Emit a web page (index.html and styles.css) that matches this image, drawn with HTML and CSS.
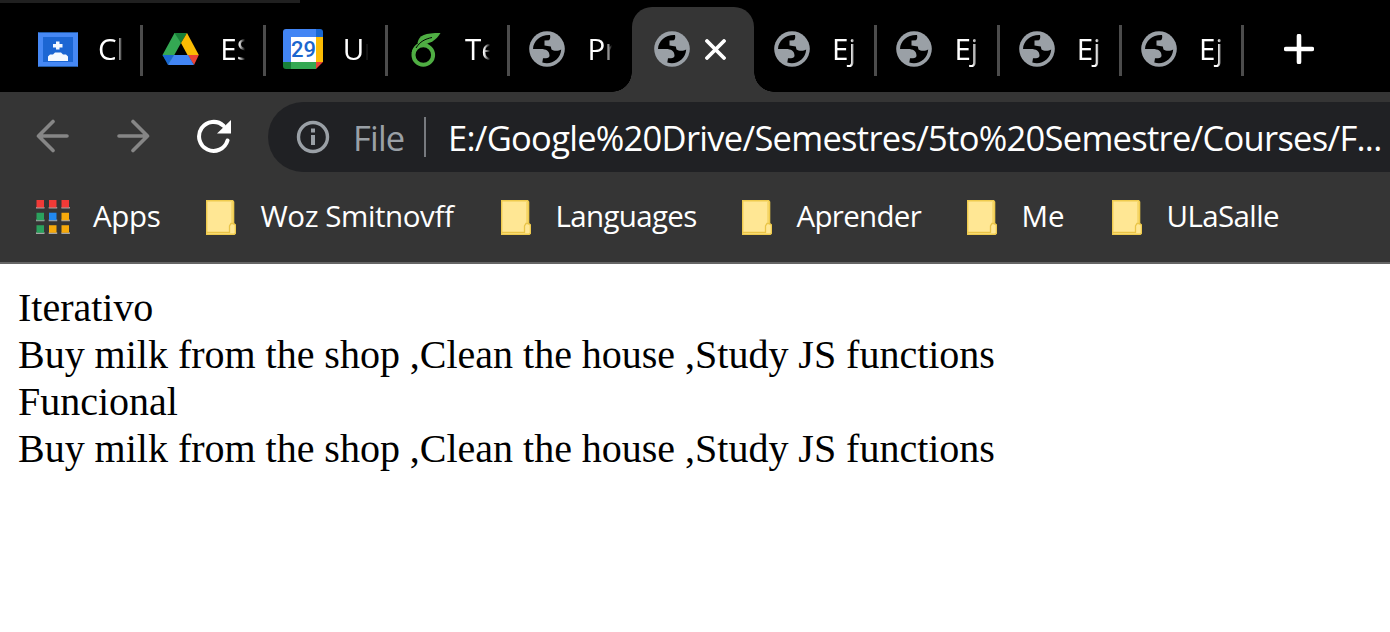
FILE: index.html
```html
<!DOCTYPE html>
<html lang="es">
<head>
<meta charset="utf-8">
<title>Ejercicio</title>
<link rel="stylesheet" href="styles.css">
</head>
<body>
<svg class="defs" width="0" height="0">
  <symbol id="globe" viewBox="0 0 36 36">
    <circle cx="18" cy="18" r="17.8" fill="#9aa0a6"/>
    <path class="sea" d="M21 4C12 3.500 4.300 9.500 4 18H12C17 18 20.500 20 20.500 24.500C20.500 26.500 19 27.300 14 27.300L13.300 31.500C22 34.500 31.500 28.500 32.200 18.500C30 20 25 20.500 22.500 18.500L21.800 15.500L15.500 14.500V9.500L20 9.300C21.300 8 21.500 6 21 4Z"/>
  </symbol>
  <symbol id="folder" viewBox="0 0 30 35">
    <path d="M.6.6H26.500L27.500 2V23.500L29.500 25V33L28 34.400H.6Z" fill="#ffe794" stroke="#efcb4e" stroke-width="1.600"/>
    <path d="M1 32.300H23.500V26L25 23.500H28" fill="none" stroke="#e9c448" stroke-width="1.300"/>
    <path d="M26 2V23.500" stroke="#efcb4e"/>
  </symbol>
</svg>

<header class="tabstrip">
  <div class="tab">
    <svg class="icon" viewBox="0 0 40 40"><rect y="3" width="40" height="35" rx="1" fill="#4688f4"/><path d="M1 3.500H39M1 37.500H39" stroke="#205aa7" stroke-width="1.200"/><rect x="5" y="8" width="30" height="25" fill="#1c66d3"/><path d="M18 12.500H21.500V15H24.500V18.500H21.500V20.500H18V18.500H15V15H18ZM10 32V27.500L12 25.500H15L17 23.500H23L25 25.500H28L30 27.500V32Z" fill="#f5f9ff"/></svg>
    <span class="name">Cl</span>
  </div>
  <div class="tab">
    <svg class="icon" viewBox="0 0 40 40"><path d="M14.500 4H18L21 14L14.300 26L9 36L2.500 26Z" fill="#34a853"/><path d="M14.500 4H27L21 14Z" fill="#188038"/><path d="M27 4L38.800 26H27.500L21 14Z" fill="#fbbc04"/><path d="M27.500 26H38.800L34 36Z" fill="#ea4335"/><path d="M14 26L8 36L2.500 26Z" fill="#1967d2"/><path d="M14 26H28L34 36H8Z" fill="#4285f4"/></svg>
    <span class="name">ES</span>
  </div>
  <div class="tab">
    <svg class="icon calendar" viewBox="0 0 40 40"><path d="M0 3Q0 0 3 0H33V33H0Z" fill="#4285f4"/><path d="M33 0H37Q40 0 40 3V8H33Z" fill="#1967d2"/><path d="M33 8H40V33H33Z" fill="#fbbc04"/><path d="M0 33H8V40H3Q0 40 0 37Z" fill="#188038"/><path d="M8 33H33V40H8Z" fill="#34a853"/><path d="M33 33H40L33 40Z" fill="#ea4335"/><rect x="8" y="8" width="25" height="25" fill="#fff"/><text class="date" x="20.500" y="28" text-anchor="middle">29</text></svg>
    <span class="name">Un</span>
  </div>
  <div class="tab">
    <svg class="icon" viewBox="0 0 40 40" fill="none"><circle cx="18.300" cy="26" r="9.800" stroke="#4fae43" stroke-width="4"/><path d="M8.300 24C9 19 14 14.500 23 12.500" stroke="#4fae43" stroke-width="3.400"/><path d="M12.500 14C14 6 20 4 35.500 4C31 11.500 25 15.500 14 15Z" fill="#4fae43"/><path d="M11 19C15 12.500 20 10 27 8.500" stroke="#000" stroke-width="1"/></svg>
    <span class="name">Te</span>
  </div>
  <div class="tab plain"><svg class="icon globe"><use href="#globe"/></svg><span class="name">Pr</span></div>
  <div class="tab active">
    <svg class="icon globe"><use href="#globe"/></svg>
    <svg class="close" viewBox="0 0 21 21"><path d="M2 2L19 19M19 2L2 19" stroke="#fff" stroke-width="3.800" stroke-linecap="round"/></svg>
  </div>
  <div class="tab"><svg class="icon globe"><use href="#globe"/></svg><span class="name">Ej</span></div>
  <div class="tab"><svg class="icon globe"><use href="#globe"/></svg><span class="name">Ej</span></div>
  <div class="tab"><svg class="icon globe"><use href="#globe"/></svg><span class="name">Ej</span></div>
  <div class="tab"><svg class="icon globe"><use href="#globe"/></svg><span class="name">Ej</span></div>
  <svg class="plus" viewBox="0 0 30 30"><path d="M15 2V28M2 15H28" stroke="#fff" stroke-width="4.600" stroke-linecap="round"/></svg>
</header>

<nav class="toolbar">
  <svg class="nav-icon" viewBox="0 0 34 34"><path d="M31 17H3M17 2.500L2.500 17L17 31.500" /></svg>
  <svg class="nav-icon forward" viewBox="0 0 34 34"><path d="M3 17H31M17 2.500L31.500 17L17 31.500" /></svg>
  <svg class="reload" viewBox="0 0 36 34"><path d="M31.500 21.500A14.500 14.500 0 1 1 27.500 6.800" fill="none" stroke="#fff" stroke-width="4" stroke-linecap="round"/><path d="M35 1V14.500H21Z" fill="#fff"/></svg>
  <div class="omnibox">
    <svg class="info" viewBox="0 0 34 34"><circle cx="17" cy="17" r="14.500" fill="none" stroke="#9aa0a6" stroke-width="3.400"/><path d="M15 8.500H19V12.500H15ZM15 15H19V25H15Z" fill="#9aa0a6"/></svg>
    <span class="scheme">File</span>
    <span class="rule"></span>
    <span class="url">E:/Google%20Drive/Semestres/5to%20Semestre/Courses/F...</span>
  </div>
</nav>

<nav class="bookmarks">
  <div class="mark apps">
    <svg class="grid" viewBox="0 0 34 34"><path d="M0 7.700H8.500M12.700 7.700H21.200M25.400 7.700H33.900M0 20.400H8.500M12.700 20.400H21.200M25.400 20.400H33.900M0 33.100H8.500M12.700 33.100H21.200M25.400 33.100H33.900" stroke="#a5a5a5" stroke-width="1.600"/><path d="M.5 0H8V7.500H.5ZM13 0H20.500V7.500H13ZM25.500 0H33V7.500H25.500Z" fill="#f13a37"/><path d="M.5 12.700H8V20.200H.5ZM.5 25.300H8V32.800H.5Z" fill="#2ba15d"/><path d="M13 12.700H20.500V20.200H13Z" fill="#2188ef"/><path d="M25.500 12.700H33V20.200H25.500ZM13 25.300H20.500V32.800H13ZM25.500 25.300H33V32.800H25.500Z" fill="#f6a90b"/></svg>
    <span class="label l-apps">Apps</span>
  </div>
  <div class="mark woz"><svg class="folder"><use href="#folder"/></svg><span class="label l-woz">Woz Smitnovff</span></div>
  <div class="mark lang"><svg class="folder"><use href="#folder"/></svg><span class="label l-lang">Languages</span></div>
  <div class="mark apr"><svg class="folder"><use href="#folder"/></svg><span class="label l-apr">Aprender</span></div>
  <div class="mark me"><svg class="folder"><use href="#folder"/></svg><span class="label">Me</span></div>
  <div class="mark"><svg class="folder"><use href="#folder"/></svg><span class="label l-ula">ULaSalle</span></div>
</nav>

<main class="page">
  <div>Iterativo</div>
  <div>Buy milk from the shop ,Clean the house ,Study JS functions</div>
  <div>Funcional</div>
  <div>Buy milk from the shop ,Clean the house ,Study JS functions</div>
</main>
</body>
</html>
```
FILE: styles.css
```css
* { box-sizing: border-box; }
body { margin: 0; width: 1390px; height: 632px; overflow: hidden; background: #fff; font-family: "Open Sans", "Noto Sans", sans-serif; }
.defs { position: absolute; }
svg { display: block; flex: none; }

.tabstrip { display: flex; height: 92px; padding: 7px 0 0 20px; background: linear-gradient(#202020, #202020) 0 0 / 300px 3px no-repeat #000; }
.tab { position: relative; flex: none; display: flex; align-items: center; width: 122.35px; height: 85px; padding: 0 0 1px 18px; --sea: #000; }
.tab::after { content: ""; position: absolute; right: -1px; top: 18px; width: 3px; height: 51px; background: #4c4c4c; }
.tab.plain::after { display: none; }
.icon { width: 40px; height: 40px; }
.icon.globe { width: 36px; height: 36px; margin: 0 2px; }
.date { font: 500 22px Roboto, sans-serif; fill: #1b66ce; }
.name { width: 25px; margin-left: 20px; overflow: hidden; font-size: 29.500px; line-height: 42px; padding-bottom: 1px; color: #fff; white-space: nowrap; -webkit-mask-image: linear-gradient(to right, #000 75%, transparent); mask-image: linear-gradient(to right, #000 75%, transparent); }
.tab.active { --sea: #353535; background: #353535; border-radius: 20px 20px 0 0; padding-left: 20px; }
.tab.active::before, .tab.active::after { content: ""; position: absolute; top: auto; bottom: 0; width: 20px; height: 20px; }
.tab.active::before { left: -20px; background: radial-gradient(circle at 0 0, transparent 19.5px, #353535 20px); }
.tab.active::after { right: -20px; background: radial-gradient(circle at 100% 0, transparent 19.5px, #353535 20px); }
.close { width: 21px; height: 21px; margin-left: 13px; }
.plus { width: 30px; height: 30px; margin: 27px 0 0 41px; }

.toolbar { display: flex; align-items: center; height: 90px; padding: 0 0 2px 36px; background: #353535; }
.nav-icon { width: 34px; height: 34px; fill: none; stroke: #868686; stroke-width: 3.600; stroke-linecap: round; stroke-linejoin: round; }
.forward { margin-left: 46px; }
.reload { width: 36px; height: 34px; margin-left: 46px; }
.omnibox { display: flex; align-items: center; flex: 1; height: 70px; margin: 2px 0 0 36px; padding-left: 28px; background: #202124; border-radius: 35px 0 0 35px; font-size: 34.500px; white-space: nowrap; color: #fff; }
.info { width: 34px; height: 34px; }
.scheme { width: 52px; margin-left: 23px; color: #9aa0a6; letter-spacing: -.8px; }
.rule { flex: none; width: 2px; height: 40px; margin-left: 19px; background: #777a7f; }
.url { margin-left: 22px; letter-spacing: -.72px; }

.bookmarks { display: flex; align-items: center; height: 82px; padding: 0 0 10px 36px; background: #353535; border-bottom: 2px solid #666; }
.mark { display: flex; align-items: center; flex: none; }
.apps { width: 169.5px; }
.woz { width: 295px; }
.lang { width: 241px; }
.apr { width: 225px; }
.me { width: 145px; }
.grid { width: 34px; height: 34px; }
.folder { width: 30px; height: 35px; }
.label { margin: -2px 0 0 25px; font-size: 29.500px; line-height: 40px; color: #fff; white-space: nowrap; }
.l-apps { margin-left: 23px; letter-spacing: -.3px; }
.l-woz { letter-spacing: -.42px; }
.l-lang { letter-spacing: -.65px; }
.l-apr { letter-spacing: -.7px; }
.l-ula { letter-spacing: -.6px; }

.page { padding: 20px 18px; font: 40px/47px "Liberation Serif", serif; letter-spacing: -.015px; color: #000; }
```
